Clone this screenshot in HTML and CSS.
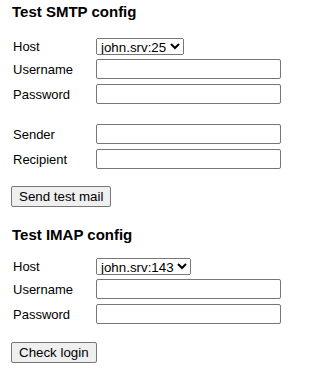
FILE: index.html
```html
<!DOCTYPE html>
<html>
<head>
<meta charset="utf-8">
<link rel="stylesheet" href="styles.css">
</head>
<body>
<div class="page">
  <section class="block smtp">
    <h3 class="title">Test SMTP config</h3>
    <div class="rows">
      <div class="row row-select">
        <label class="lbl">Host</label>
        <select class="sel sel-smtp"><option>john.srv:25</option></select>
      </div>
      <div class="row">
        <label class="lbl">Username</label>
        <input class="txt" type="text">
      </div>
      <div class="row">
        <label class="lbl">Password</label>
        <input class="txt" type="password">
      </div>
      <div class="row row-after-gap">
        <label class="lbl">Sender</label>
        <input class="txt" type="text">
      </div>
      <div class="row">
        <label class="lbl">Recipient</label>
        <input class="txt" type="text">
      </div>
    </div>
    <button class="btn" type="button">Send test mail</button>
  </section>
  <section class="block imap">
    <h3 class="title">Test IMAP config</h3>
    <div class="rows">
      <div class="row row-select">
        <label class="lbl">Host</label>
        <select class="sel sel-imap"><option>john.srv:143</option></select>
      </div>
      <div class="row">
        <label class="lbl">Username</label>
        <input class="txt" type="text">
      </div>
      <div class="row">
        <label class="lbl">Password</label>
        <input class="txt" type="password">
      </div>
    </div>
    <button class="btn" type="button">Check login</button>
  </section>
</div>
</body>
</html>
```
FILE: styles.css
```css
html, body {
  margin: 0;
  padding: 0;
  background: #ffffff;
}
body {
  font-family: "Liberation Sans", Arial, sans-serif;
  font-size: 13px;
  color: #000000;
}
.page {
  padding: 0 0 0 11px;
}
.block {
  display: flex;
  flex-direction: column;
  align-items: flex-start;
}
.title {
  margin: 3px 0 0 1px;
  font-size: 15px;
  line-height: 18px;
  font-weight: bold;
}
.imap .title {
  margin-top: 19px;
}
.rows {
  display: flex;
  flex-direction: column;
  margin-top: 17px;
}
.imap .rows {
  margin-top: 14px;
}
.row {
  display: flex;
  align-items: center;
  height: 20px;
  padding-left: 2px;
}
.row + .row {
  margin-top: 5px;
}
.row.row-select {
  height: 17px;
}
.row.row-select + .row {
  margin-top: 4px;
}
.row.row-after-gap {
  margin-top: 20px;
}
.lbl {
  width: 83px;
  flex: none;
  line-height: 15px;
}
.txt {
  box-sizing: border-box;
  width: 185px;
  height: 20px;
  margin: 0;
  padding: 1px 2px;
  border: 1px solid #767676;
  border-radius: 2px;
  font-family: "Liberation Sans", Arial, sans-serif;
  font-size: 13.333px;
  background: #ffffff;
}
.sel {
  box-sizing: border-box;
  height: 17px;
  margin: 0;
  font-family: "Liberation Sans", Arial, sans-serif;
  font-size: 13.333px;
  color: #000000;
}
.btn {
  box-sizing: border-box;
  margin-top: 17px;
  height: 21px;
  padding: 1px 7px;
  border: 1px solid #767676;
  border-radius: 2px;
  background: #efefef;
  font-family: "Liberation Sans", Arial, sans-serif;
  font-size: 13.333px;
  line-height: 15px;
  color: #000000;
}
.imap .btn {
  margin-top: 18px;
}
```
